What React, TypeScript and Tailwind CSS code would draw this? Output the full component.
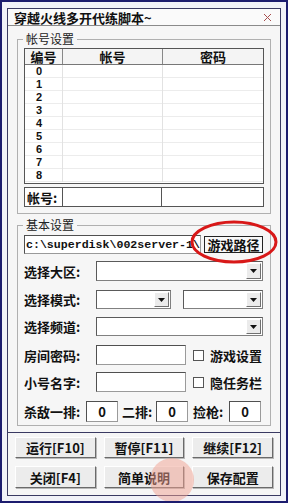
import React from "react";

function Arrow() {
  return (
    <div className="my-[1px] mr-[1px] flex w-[15px] items-center justify-center border border-t-white border-l-white border-r-[#707070] border-b-[#707070] bg-[#ebebeb]">
      <svg width="7" height="4" viewBox="0 0 7 4">
        <path d="M0 0h7L3.5 4z" fill="#111" />
      </svg>
    </div>
  );
}

function Dropdown({ className }: { className: string }) {
  return (
    <div className={`flex border border-[#808080] border-t-[#5a5a5a] border-l-[#5a5a5a] bg-white ${className}`}>
      <div className="flex-1" />
      <Arrow />
    </div>
  );
}

function Box({ className, children }: { className: string; children?: React.ReactNode }) {
  return (
    <div
      className={`flex items-center justify-center border border-[#9a9a9a] border-t-[#505050] border-l-[#505050] bg-white ${className}`}
    >
      {children}
    </div>
  );
}

function Check({ label }: { label: string }) {
  return (
    <div className="ml-[7px] flex items-center">
      <div className="h-[11px] w-[11px] border border-[#555] bg-white" />
      <span className="ml-[6px] text-[13px] font-bold leading-none">{label}</span>
    </div>
  );
}

function Btn({ label }: { label: string }) {
  return (
    <div className="flex items-center justify-center border border-t-white border-l-white border-r-[#6a6a6a] border-b-[#6a6a6a] bg-[#ececec] shadow-[1px_1px_0_#b8b8b8]">
      <span className="text-[13px] font-bold leading-none">{label}</span>
    </div>
  );
}

const rows = ["0", "1", "2", "3", "4", "5", "6", "7", "8"];

export default function App() {
  return (
    <div className="relative h-[503px] w-[288px] overflow-hidden border-2 border-[#1c1c6e] bg-[#f1f2f8] px-[5px] pt-[6px] pb-[5px] font-['Noto_Sans_CJK_SC',sans-serif] text-[#111]">
      <div className="flex h-full flex-col border border-[#3a3a62] bg-[#f6f6f6]">
        {/* title */}
        <div className="flex h-[17px] items-center border-b border-[#8a8a8a] bg-[#fafafa] pl-[6px] pr-[9px]">
          <span className="text-[13px] font-bold leading-none">穿越火线多开代练脚本~</span>
          <svg className="ml-auto" width="7" height="7" viewBox="0 0 7 7">
            <path d="M0 0L7 7M7 0L0 7" stroke="#a85050" strokeWidth="1" />
          </svg>
        </div>

        {/* 帐号设置 */}
        <div className="relative ml-[9px] mt-[13px] h-[175px] w-[254px] border border-[#b0b0b0] pl-[6px] pt-[8px]">
          <span className="absolute -top-[9px] left-[5px] bg-[#f6f6f6] px-[3px] text-[12px] leading-[16px] text-[#222]">
            帐号设置
          </span>
          <div className="flex h-[136px] w-[240px] flex-col border-[1.5px] border-[#555] bg-white">
            <div className="flex h-[16px] border-b border-[#777] bg-[#f4f4f4] text-[13px] font-bold leading-none">
              <div className="flex w-[38px] items-center justify-center border-r border-[#888]">编号</div>
              <div className="flex w-[100px] items-center justify-center border-r border-[#888]">帐号</div>
              <div className="flex flex-1 items-center justify-center">密码</div>
            </div>
            {rows.map((r) => (
              <div key={r} className="flex h-[13px] shadow-[inset_0_-1px_0_#ececec]">
                <div className="flex w-[38px] items-center border-r border-[#e2e2e2] pl-[11px] font-['Liberation_Sans',sans-serif] text-[11px] font-bold leading-none">
                  {r}
                </div>
                <div className="w-[100px] border-r border-[#e2e2e2]" />
                <div className="flex-1" />
              </div>
            ))}
          </div>
          <div className="mt-[3px] flex h-[20px] w-[240px] border-[1.5px] border-[#555] bg-white">
            <div className="flex w-[38px] items-center border-r border-[#555] pl-[2px] text-[13px] font-bold leading-none">
              帐号:
            </div>
            <div className="w-[99px] border-r border-[#555]" />
            <div className="flex-1" />
          </div>
        </div>

        {/* 基本设置 */}
        <div className="relative ml-[9px] mt-[11px] h-[201px] w-[254px] border border-[#b0b0b0] pl-[6px] pt-[9px]">
          <span className="absolute -top-[9px] left-[5px] bg-[#f6f6f6] px-[3px] text-[12px] leading-[16px] text-[#222]">
            基本设置
          </span>
          <div className="flex h-[19px] items-center">
            <div className="flex h-full w-[177px] items-center overflow-hidden whitespace-nowrap border border-[#9a9a9a] border-t-[#505050] border-l-[#505050] bg-white pl-[1px] font-['Liberation_Mono',monospace] text-[11.6px] font-bold leading-none">
              c:\superdisk\002server-1\
            </div>
            <div className="ml-[3px] flex h-[17px] w-[59px] items-center justify-center border border-[#222] bg-[#f8f8f8] text-[13px] font-bold leading-none">
              游戏路径
            </div>
          </div>

          <div className="mt-[7px] flex h-[20px] items-center">
            <span className="w-[72px] text-[13px] font-bold leading-none">选择大区:</span>
            <Dropdown className="h-[20px] w-[167px]" />
          </div>

          <div className="mt-[9px] flex h-[19px] items-center">
            <span className="w-[72px] text-[13px] font-bold leading-none">选择模式:</span>
            <Dropdown className="h-[19px] w-[75px]" />
            <Dropdown className="ml-[12px] h-[19px] w-[80px]" />
          </div>

          <div className="mt-[8px] flex h-[19px] items-center">
            <span className="w-[72px] text-[13px] font-bold leading-none">选择频道:</span>
            <Dropdown className="h-[19px] w-[167px]" />
          </div>

          <div className="mt-[9px] flex h-[20px] items-center">
            <span className="w-[72px] text-[13px] font-bold leading-none">房间密码:</span>
            <Box className="h-[20px] w-[90px]" />
            <Check label="游戏设置" />
          </div>

          <div className="mt-[7px] flex h-[20px] items-center">
            <span className="w-[72px] text-[13px] font-bold leading-none">小号名字:</span>
            <Box className="h-[20px] w-[90px]" />
            <Check label="隐任务栏" />
          </div>

          <div className="mt-[9px] flex h-[21px] items-center text-[13px] font-bold leading-none">
            <span className="w-[62px]">杀敌一排:</span>
            <Box className="h-[21px] w-[32px]">0</Box>
            <span className="ml-[4px] w-[34px]">二排:</span>
            <Box className="h-[21px] w-[32px]">0</Box>
            <span className="ml-[5px] w-[36px]">捡枪:</span>
            <Box className="h-[21px] w-[32px]">0</Box>
          </div>
        </div>

        {/* buttons */}
        <div className="mt-[6px] flex-1 border-t border-[#3a3a62] px-[7px] pt-[4px]">
          <div className="grid h-[21px] grid-cols-3 gap-[8px]">
            <Btn label="运行[F10]" />
            <Btn label="暂停[F11]" />
            <Btn label="继续[F12]" />
          </div>
          <div className="mt-[8px] grid h-[22px] grid-cols-3 gap-[8px]">
            <Btn label="关闭[F4]" />
            <Btn label="简单说明" />
            <Btn label="保存配置" />
          </div>
        </div>
      </div>

      {/* red highlight */}
      <svg className="pointer-events-none absolute left-[186px] top-[216px]" width="96" height="50" viewBox="0 0 96 50">
        <ellipse cx="46" cy="24" rx="42" ry="20" fill="none" stroke="#d81818" strokeWidth="3" />
      </svg>

      {/* watermark */}
      <div className="pointer-events-none absolute left-[148px] top-[456px] h-[44px] w-[44px] rounded-full bg-[#f0a090] opacity-50" />
    </div>
  );
}
